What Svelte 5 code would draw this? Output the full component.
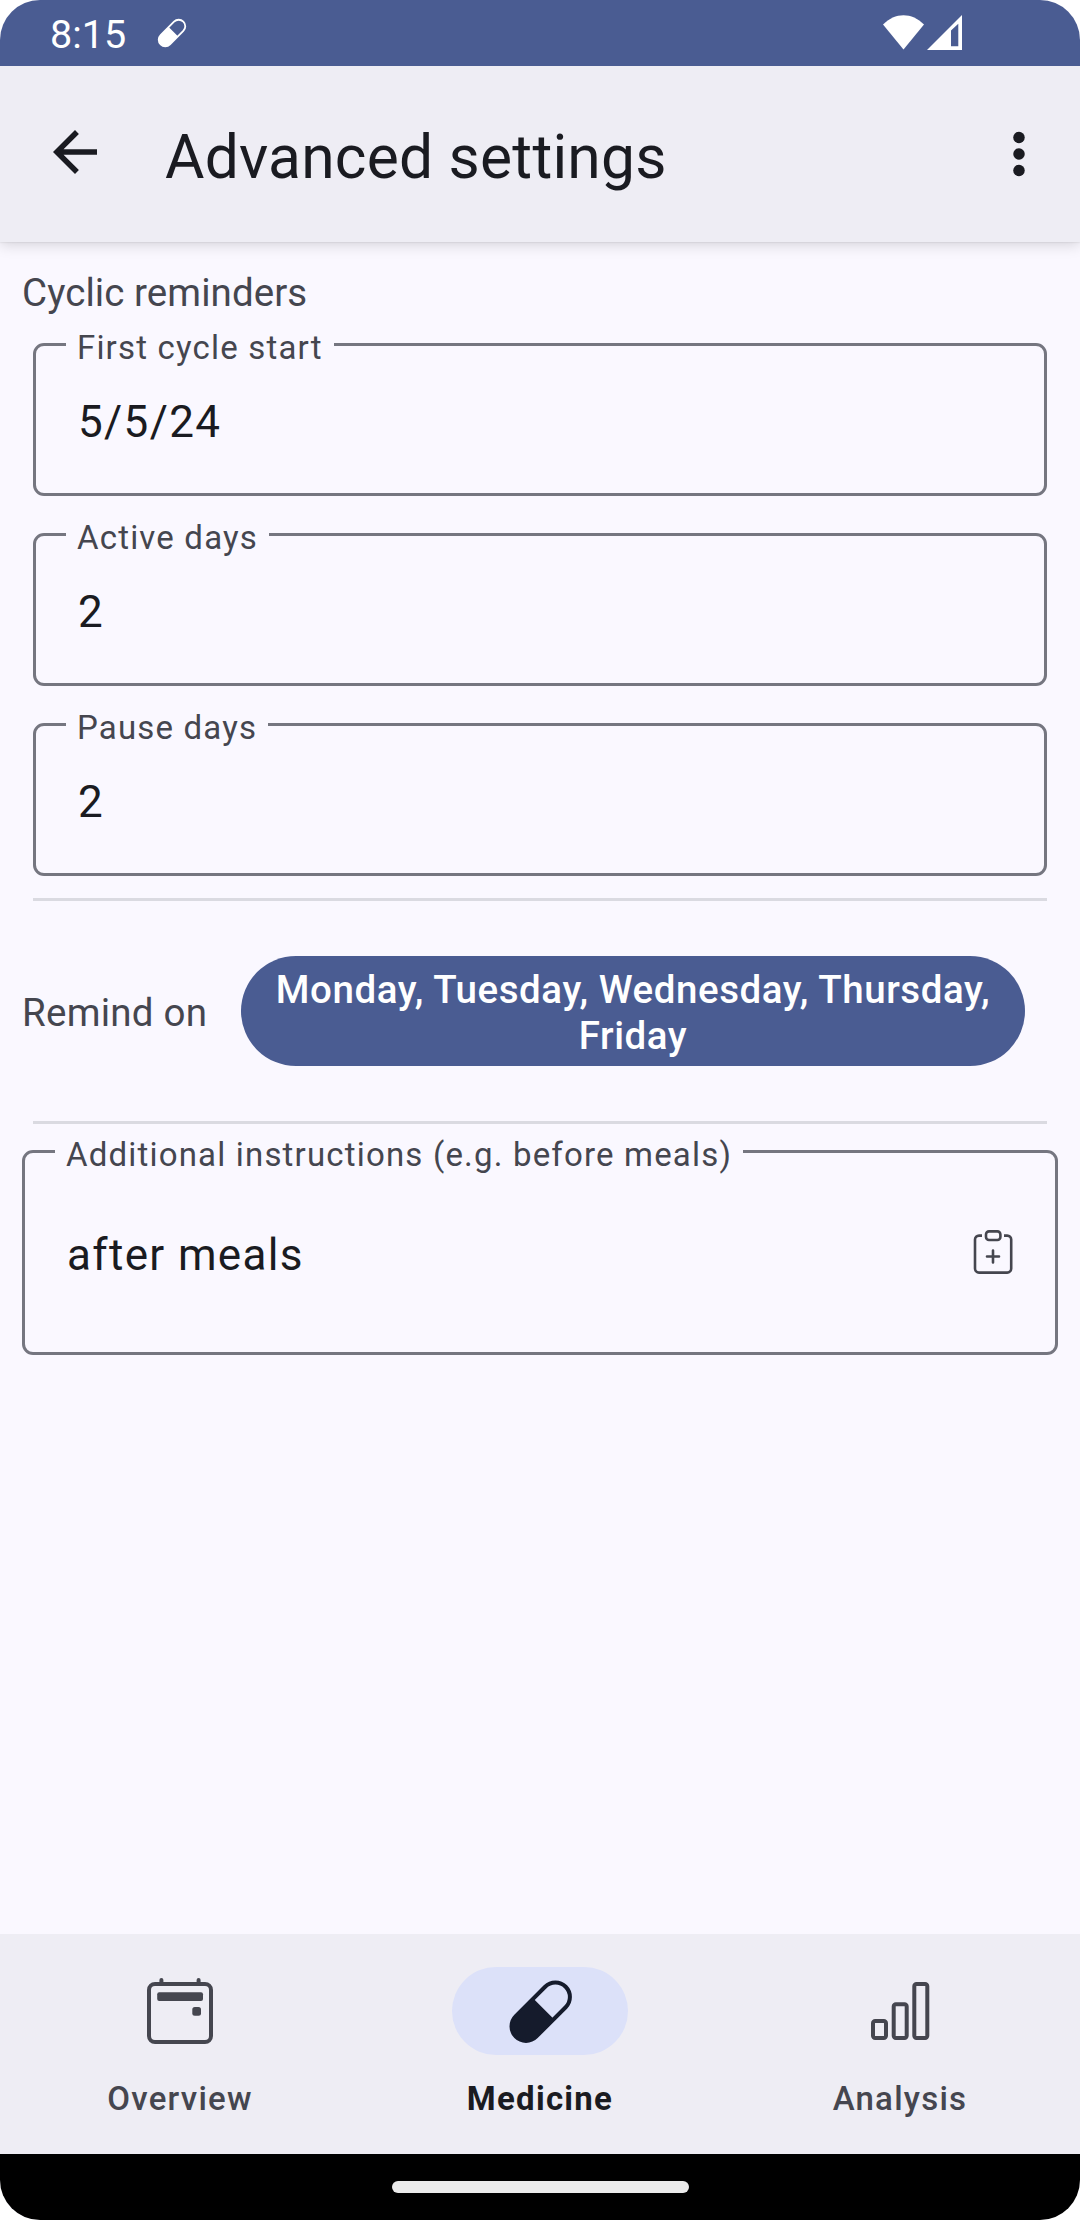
<script>
  const cycleFields = [
    { label: 'First cycle start', value: '5/5/24' },
    { label: 'Active days', value: '2' },
    { label: 'Pause days', value: '2' }
  ];
</script>

{#snippet pill()}
  <g transform="rotate(-45 33 33)">
    <path d="M12.2 18.5H53.8a14.5 14.5 0 0 1 0 29H12.2a14.5 14.5 0 0 1 0-29z" fill="none" stroke="currentColor" stroke-width="4" />
    <path d="M12.2 18.5H37v29H12.2a14.5 14.5 0 0 1 0-29z" fill="currentColor" />
  </g>
{/snippet}

<div class="screen">
  <header class="status">
    <span class="time">8:15</span>
    <svg class="status-pill" viewBox="0 0 66 66">{@render pill()}</svg>
    <svg class="signals" viewBox="0 0 80 36">
      <path d="M0 9.5C12-3 29-3 41 9.5L20.5 34.5z" fill="#fff" />
      <path fill-rule="evenodd" d="M44 35L79 0v35zM68 15.5V31.2h7.3V8.8z" fill="#fff" />
    </svg>
  </header>

  <div class="appbar">
    <svg class="back" viewBox="0 0 24 24">
      <path d="M20 11H7.83l5.59-5.59L12 4l-8 8 8 8 1.41-1.41L7.83 13H20v-2z" />
    </svg>
    <h1>Advanced settings</h1>
    <svg class="more" viewBox="0 0 12 46">
      <circle cx="6" cy="6.5" r="5.75" />
      <circle cx="6" cy="23" r="5.75" />
      <circle cx="6" cy="39.5" r="5.75" />
    </svg>
  </div>

  <main>
    <h2>Cyclic reminders</h2>
    <div class="cycle">
      {#each cycleFields as field}
        <div class="field">
          <span class="label">{field.label}</span>
          <span class="value">{field.value}</span>
        </div>
      {/each}
    </div>
    <hr />
    <div class="remind">
      <span class="remind-label">Remind on</span>
      <button>Monday, Tuesday, Wednesday, Thursday, Friday</button>
    </div>
    <hr />
    <div class="field instructions">
      <span class="label">Additional instructions (e.g. before meals)</span>
      <span class="value">after meals</span>
      <svg class="clipboard" viewBox="0 0 40 46" fill="none" stroke="currentColor" stroke-width="2.6">
        <path d="M9 5.6H6a4 4 0 0 0-4 4V38.6a4 4 0 0 0 4 4H34.2a4 4 0 0 0 4-4V9.6a4 4 0 0 0-4-4H31" />
        <rect x="13" y="1.4" width="14.4" height="8.6" rx="3" />
        <path d="M20 20.5v12M14 26.5h12" stroke-linecap="round" />
      </svg>
    </div>
  </main>

  <nav>
    <div class="tab">
      <div class="indicator">
        <svg viewBox="0 0 66 66" fill="currentColor">
          <rect x="2" y="6" width="62" height="58" rx="6" fill="none" stroke="currentColor" stroke-width="4" />
          <path d="M14.4 6V2M51.6 6V2" stroke="currentColor" stroke-width="4" stroke-linecap="round" />
          <rect x="10.2" y="14.3" width="45.8" height="8.7" rx="2" />
          <rect x="45.3" y="29" width="8.7" height="8.7" rx="2.5" />
        </svg>
      </div>
      <span>Overview</span>
    </div>
    <div class="tab active">
      <div class="indicator">
        <svg viewBox="-0.7 -0.7 66 66">{@render pill()}</svg>
      </div>
      <span>Medicine</span>
    </div>
    <div class="tab">
      <div class="indicator">
        <svg viewBox="0 0 66 66" fill="none" stroke="currentColor" stroke-width="4">
          <rect x="6" y="43" width="13" height="17" rx="2.2" />
          <rect x="26.7" y="26.3" width="13" height="33.7" rx="2.2" />
          <rect x="47.3" y="6" width="13" height="54" rx="2.2" />
        </svg>
      </div>
      <span>Analysis</span>
    </div>
  </nav>

  <footer><div class="handle"></div></footer>
</div>

<style>
  :global(body) {
    background: #fff;
  }
  .screen {
    width: 1080px;
    height: 2220px;
    display: flex;
    flex-direction: column;
    overflow: hidden;
    border-radius: 40px;
    background: #faf8ff;
    color: #45464f;
    font-family: Roboto, sans-serif;
  }
  svg {
    display: block;
    flex: none;
  }
  .status {
    position: relative;
    z-index: 1;
    height: 66px;
    display: flex;
    background: #4a5c92;
    color: #fff;
  }
  .time {
    width: 107px;
    padding: 11px 0 0 50px;
    font-size: 39.5px;
    line-height: 47px;
  }
  .status-pill {
    width: 30px;
    height: 30px;
    margin-top: 18px;
  }
  .signals {
    width: 80px;
    height: 36px;
    margin: 15px 117px 0 auto;
  }
  .appbar {
    position: relative;
    height: 176px;
    display: flex;
    align-items: flex-start;
    background: #eeedf4;
    color: #1a1b21;
    fill: #1a1b21;
    box-shadow: 0 2px 14px rgba(0, 0, 0, 0.17), 0 0 2px rgba(0, 0, 0, 0.14);
  }
  .back {
    width: 66px;
    height: 66px;
    margin: 53px 57px 0 42px;
  }
  h1 {
    flex: 1;
    margin: 0;
    padding-top: 52px;
    font-size: 60.5px;
    line-height: 80px;
    font-weight: 400;
    letter-spacing: 0.22px;
  }
  .more {
    width: 12px;
    height: 46px;
    margin: 65px 55px 0 0;
  }
  main {
    flex: 1;
    display: flex;
    flex-direction: column;
    padding: 28px 22px 0;
  }
  h2 {
    margin: 0 0 27px;
    font-size: 38.5px;
    line-height: 46px;
    font-weight: 400;
    letter-spacing: 0.07px;
  }
  .cycle {
    display: flex;
    flex-direction: column;
    gap: 37px;
    margin: 0 11px 22px;
  }
  .field {
    position: relative;
    height: 153px;
    display: flex;
    align-items: center;
    box-sizing: border-box;
    border: 3px solid #757680;
    border-radius: 11px;
    padding: 5px 42px 0;
  }
  .label {
    position: absolute;
    top: -18px;
    left: 30px;
    padding: 0 11px;
    background: #faf8ff;
    font-size: 33px;
    line-height: 40px;
    letter-spacing: 1.18px;
    white-space: nowrap;
  }
  .value {
    color: #1a1b21;
    font-size: 44px;
    line-height: 52px;
    letter-spacing: 1.35px;
  }
  hr {
    height: 3px;
    margin: 0 11px;
    border: 0;
    background: #dadae1;
  }
  .remind {
    height: 220px;
    display: flex;
    align-items: center;
    padding-right: 33px;
    box-sizing: border-box;
  }
  .remind-label {
    width: 219px;
    padding-top: 2px;
    font-size: 38.5px;
    letter-spacing: 0.25px;
  }
  button {
    width: 784px;
    height: 110px;
    border: 0;
    border-radius: 55px;
    padding: 3px 30px 0;
    background: #4a5c92;
    color: #fff;
    font: 500 38.5px/46px Roboto, sans-serif;
    letter-spacing: 0.56px;
  }
  .instructions {
    height: 205px;
    margin-top: 26px;
    justify-content: space-between;
    padding-top: 4px;
  }
  .clipboard {
    width: 40px;
    height: 46px;
    margin-bottom: 4px;
  }
  nav {
    height: 220px;
    display: flex;
    background: #eeedf4;
  }
  .tab {
    flex: 1;
    display: flex;
    flex-direction: column;
    align-items: center;
    padding-top: 33px;
    font-size: 33px;
    line-height: 40px;
    font-weight: 500;
    letter-spacing: 1.25px;
  }
  .indicator {
    width: 176px;
    height: 88px;
    display: flex;
    align-items: center;
    justify-content: center;
    margin-bottom: 24px;
    border-radius: 44px;
  }
  .indicator svg {
    width: 66px;
    height: 66px;
  }
  .active {
    color: #1a1b21;
    font-weight: 700;
  }
  .active .indicator {
    background: #dce1f9;
    color: #151b2c;
  }
  footer {
    height: 66px;
    display: flex;
    align-items: center;
    justify-content: center;
    background: #000;
  }
  .handle {
    width: 297px;
    height: 12px;
    border-radius: 6px;
    background: #ebebeb;
  }
</style>
